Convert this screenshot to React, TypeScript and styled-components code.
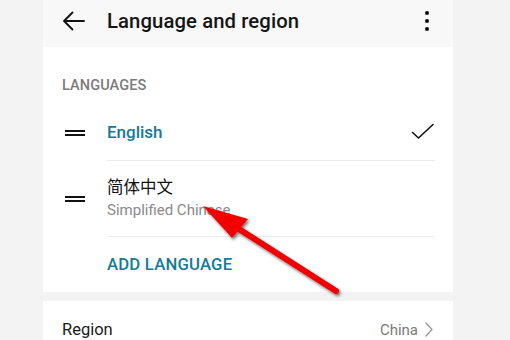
import React from "react";
import styled, { createGlobalStyle } from "styled-components";

const Global = createGlobalStyle`
  html, body { margin: 0; padding: 0; background: #f3f3f3; }
  body { font-family: Roboto, "Noto Sans", "Noto Sans CJK SC", sans-serif; width: 510px; height: 340px; overflow: hidden; }
`;

const Page = styled.div`
  position: relative;
  width: 510px;
  height: 340px;
  overflow: hidden;
`;

const Column = styled.div`
  margin-left: 43px;
  width: 410px;
  display: flex;
  flex-direction: column;
  background: #f3f3f3;
`;

const Header = styled.div`
  height: 47px;
  box-sizing: border-box;
  padding: 0 0 5px 19px;
  background: #f8f8f8;
  display: flex;
  align-items: center;
`;

const IconBtn = styled.div`
  width: 24px;
  height: 24px;
  display: flex;
  align-items: center;
  justify-content: center;
`;

const Title = styled.div`
  margin-left: 21px;
  font-size: 20.3px;
  font-weight: 500;
  color: #151515;
  flex: 1;
  letter-spacing: 0.1px;
`;

const MoreBtn = styled.div`
  width: 24px;
  height: 24px;
  margin-right: 14px;
  display: flex;
  align-items: center;
  justify-content: center;
`;

const Card = styled.div`
  background: #fff;
  display: flex;
  flex-direction: column;
`;

const LangCard = styled(Card)`
  height: 245px;
`;

const RegionCard = styled(Card)`
  margin-top: 9px;
  height: 60px;
`;

const SectionLabel = styled.div`
  padding: 30px 0 0 19px;
  margin-bottom: 10px;
  height: 17px;
  font-size: 14.5px;
  font-weight: 500;
  color: #7b7b7b;
  letter-spacing: 0.1px;
  line-height: 17px;
`;

const LangRow = styled.div<{ $h: number }>`
  display: flex;
  align-items: center;
  height: ${(p) => p.$h}px;
  padding-left: 22px;
`;

const Handle = styled.div`
  width: 20px;
  display: flex;
  flex-direction: column;
  gap: 2px;
  & > span {
    display: block;
    height: 2px;
    background: #111;
  }
`;

const RowBody = styled.div<{ $divider?: boolean }>`
  flex: 1;
  margin-left: 22px;
  margin-right: 18px;
  align-self: stretch;
  display: flex;
  align-items: center;
  border-bottom: ${(p) => (p.$divider ? "1px solid #ebebeb" : "none")};
`;

const Texts = styled.div`
  flex: 1;
  display: flex;
  flex-direction: column;
`;

const LangName = styled.div<{ $active?: boolean }>`
  font-size: ${(p) => (p.$active ? "17px" : "16.5px")};
  font-weight: ${(p) => (p.$active ? 500 : 400)};
  color: ${(p) => (p.$active ? "#137b97" : "#111")};
  line-height: 20px;
`;

const SubName = styled.div`
  margin-top: 4px;
  font-size: 15px;
  color: #8a8a8a;
  line-height: 17px;
`;

const AddLang = styled.div`
  padding-left: 64px;
  height: 55px;
  display: flex;
  align-items: center;
  font-size: 16.7px;
  font-weight: 500;
  color: #137b97;
  letter-spacing: 0.2px;
`;

const RegionRow = styled.div`
  display: flex;
  align-items: center;
  padding: 19px 20px 0 19px;
`;

const RegionLabel = styled.div`
  flex: 1;
  font-size: 16.5px;
  color: #1a1a1a;
`;

const RegionValue = styled.div`
  font-size: 15px;
  color: #7a7a7a;
  margin-right: 7px;
`;

const Overlay = styled.svg`
  position: absolute;
  left: 0;
  top: 0;
  pointer-events: none;
`;

export default function App() {
  return (
    <Page>
      <Global />
      <Column>
        <Header>
          <IconBtn>
            <svg width="24" height="24" viewBox="0 0 24 24" fill="none" stroke="#111" strokeWidth="1.8" strokeLinecap="round" strokeLinejoin="round">
              <path d="M22 12H2.5M10.5 3.5L2 12l8.5 8.5" />
            </svg>
          </IconBtn>
          <Title>Language and region</Title>
          <MoreBtn>
            <svg width="6" height="22" viewBox="0 0 6 22">
              <circle cx="3" cy="3" r="2.1" fill="#111" />
              <circle cx="3" cy="11" r="2.1" fill="#111" />
              <circle cx="3" cy="19" r="2.1" fill="#111" />
            </svg>
          </MoreBtn>
        </Header>
        <LangCard>
          <SectionLabel>LANGUAGES</SectionLabel>
          <LangRow $h={57}>
            <Handle><span /><span /></Handle>
            <RowBody $divider>
              <Texts>
                <LangName $active>English</LangName>
              </Texts>
              <svg width="24" height="18" viewBox="0 0 24 18" fill="none" stroke="#111" strokeWidth="1.6" strokeLinecap="round" strokeLinejoin="round">
                <path d="M1.5 9.5l6 5.5L22 1.5" />
              </svg>
            </RowBody>
          </LangRow>
          <LangRow $h={76}>
            <Handle><span /><span /></Handle>
            <RowBody $divider>
              <Texts>
                <LangName>简体中文</LangName>
                <SubName>Simplified Chinese</SubName>
              </Texts>
            </RowBody>
          </LangRow>
          <AddLang>ADD LANGUAGE</AddLang>
        </LangCard>
        <RegionCard>
          <RegionRow>
            <RegionLabel>Region</RegionLabel>
            <RegionValue>China</RegionValue>
            <svg width="8" height="15" viewBox="0 0 8 15" fill="none" stroke="#999" strokeWidth="1.3" strokeLinecap="round" strokeLinejoin="round">
              <path d="M1 1l6 6.5L1 14" />
            </svg>
          </RegionRow>
        </RegionCard>
      </Column>
      <Overlay width="510" height="340" viewBox="0 0 510 340">
        <defs>
          <filter id="sh" x="-20%" y="-20%" width="140%" height="140%">
            <feDropShadow dx="1.5" dy="2" stdDeviation="1.6" floodColor="#000" floodOpacity="0.55" />
          </filter>
        </defs>
        <g filter="url(#sh)">
          <line x1="336" y1="291" x2="228" y2="222" stroke="#f00000" strokeWidth="6" strokeLinecap="round" />
          <polygon points="203,206 248,219 232,238" fill="#f00000" />
        </g>
      </Overlay>
    </Page>
  );
}
